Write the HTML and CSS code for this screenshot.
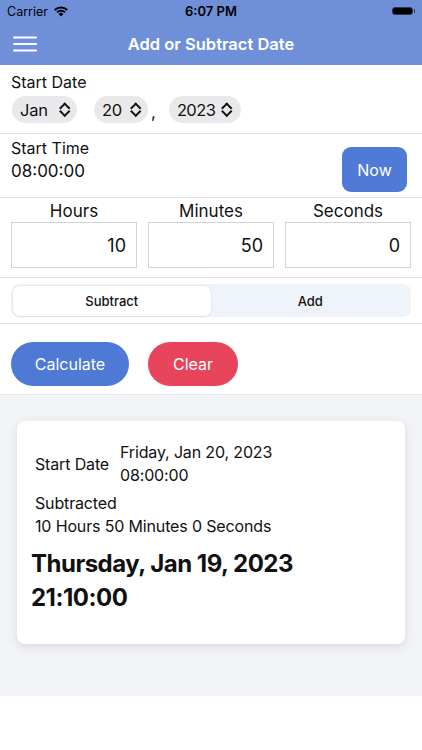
FILE: index.html
```html
<!DOCTYPE html>
<html>
<head>
<meta charset="utf-8">
<link rel="stylesheet" href="styles.css">
</head>
<body>
<div class="app">
  <div class="top">
    <div class="status">
      <div class="carrier">Carrier
        <svg class="wifi" width="16" height="12" viewBox="0 0 16 12"><path d="M8 11.5 L5.6 8.9 A3.4 3.4 0 0 1 10.4 8.9 Z" fill="#000"/><path d="M3.4 6.6 A6.6 6.6 0 0 1 12.6 6.6 L11.3 8 A4.7 4.7 0 0 0 4.7 8 Z" fill="#000"/><path d="M1.1 4.3 A9.9 9.9 0 0 1 14.9 4.3 L13.6 5.7 A8 8 0 0 0 2.4 5.7 Z" fill="#000"/></svg>
      </div>
      <div class="clock">6:07 PM</div>
      <div class="battery"><span class="cell"></span><span class="nub"></span></div>
    </div>
    <div class="nav">
      <svg class="menu" width="24" height="16" viewBox="0 0 24 16"><rect x="0" y="0.5" width="24" height="2" rx="1" fill="#fff"/><rect x="0" y="7" width="24" height="2" rx="1" fill="#fff"/><rect x="0" y="13.5" width="24" height="2" rx="1" fill="#fff"/></svg>
      <div class="title">Add or Subtract Date</div>
    </div>
  </div>

  <div class="sec date-sec">
    <div class="label">Start Date</div>
    <div class="pickers">
      <div class="pill p-month"><span>Jan</span><span class="chev"></span></div>
      <div class="pill p-day"><span>20</span><span class="chev"></span></div>
      <span class="comma">,</span>
      <div class="pill p-year"><span>2023</span><span class="chev"></span></div>
    </div>
  </div>

  <div class="sec time-sec">
    <div>
      <div class="label">Start Time</div>
      <div class="value">08:00:00</div>
    </div>
    <div class="now">Now</div>
  </div>

  <div class="sec units">
    <div class="unit"><div class="ulabel">Hours</div><div class="box">10</div></div>
    <div class="unit"><div class="ulabel">Minutes</div><div class="box">50</div></div>
    <div class="unit"><div class="ulabel">Seconds</div><div class="box">0</div></div>
  </div>

  <div class="sec seg-sec">
    <div class="seg">
      <div class="segitem on">Subtract</div>
      <div class="segitem">Add</div>
    </div>
  </div>

  <div class="actions">
    <div class="btn calc">Calculate</div>
    <div class="btn clear">Clear</div>
  </div>

  <div class="result-area">
    <div class="card">
      <div class="row">
        <div class="rlabel">Start Date</div>
        <div class="rval">Friday, Jan 20, 2023<br>08:00:00</div>
      </div>
      <div class="sub">Subtracted<br>10 Hours 50 Minutes 0 Seconds</div>
      <div class="big">Thursday, Jan 19, 2023<br>21:10:00</div>
    </div>
  </div>
</div>
</body>
</html>
```

FILE: styles.css
```css
html, body {
  margin: 0;
  padding: 0;
  background: #fff;
}
body {
  font-family: Inter, "Liberation Sans", sans-serif;
  color: #111;
}
.app {
  width: 422px;
  height: 750px;
  overflow: hidden;
}
.top {
  background: #6f90d9;
}
.status {
  height: 22px;
  display: flex;
  align-items: center;
  justify-content: space-between;
  padding: 0 7px 0 7px;
  font-size: 12.5px;
  color: #000;
  position: relative;
}
.carrier {
  display: flex;
  align-items: center;
  gap: 5px;
}
.clock {
  font-weight: 600;
  font-size: 13px;
  position: absolute;
  left: 0;
  right: 0;
  text-align: center;
}
.battery {
  display: flex;
  align-items: center;
  gap: 1px;
}
.cell {
  width: 19px;
  height: 6px;
  background: #000;
  border: 1.5px solid #2d3a55;
  border-radius: 3px;
}
.nub {
  width: 1.5px;
  height: 4px;
  background: #2d3a55;
  border-radius: 1px;
}
.nav {
  height: 43px;
  display: flex;
  align-items: center;
  position: relative;
  padding-left: 13px;
}
.title {
  position: absolute;
  left: 0;
  right: 0;
  text-align: center;
  color: #fff;
  font-size: 16.5px;
  font-weight: 600;
}
.sec {
  border-bottom: 1px solid #e2e2e4;
  padding: 0 11px;
}
.label {
  font-size: 16px;
}
.date-sec {
  padding-top: 7px;
  box-sizing: border-box;
  height: 69px;
}
.pickers {
  display: flex;
  align-items: center;
  margin-top: 4px;
}
.pill {
  background: #e9e9ec;
  border-radius: 14px;
  height: 27px;
  display: flex;
  align-items: center;
  justify-content: space-between;
  padding: 0 8px 0 8px;
  box-sizing: border-box;
  font-size: 16.5px;
  letter-spacing: -0.2px;
}
.p-month { width: 65px; margin-left: 1px; }
.p-day { width: 54px; margin-left: 17px; }
.p-year { width: 72px; margin-left: 13px; letter-spacing: -0.6px; padding-right: 9px; }
.comma { font-size: 17px; margin-left: 3px; margin-top: 4px; }
.chev {
  width: 11px;
  height: 14px;
  position: relative;
  display: inline-block;
}
.chev::before, .chev::after {
  content: "";
  position: absolute;
  left: 2.5px;
  width: 5.5px;
  height: 5.5px;
  border-left: 2px solid #111;
  border-top: 2px solid #111;
}
.chev::before { top: 1.5px; transform: rotate(45deg); }
.chev::after { top: 5.5px; transform: rotate(225deg); }
.time-sec {
  height: 64px;
  box-sizing: border-box;
  display: flex;
  justify-content: space-between;
  align-items: flex-start;
  padding-top: 4px;
  padding-right: 15px;
}
.value {
  font-size: 17px;
  margin-top: 3px;
}
.now {
  width: 65px;
  height: 45px;
  background: #4f7ad6;
  border-radius: 9px;
  color: #fff;
  font-size: 16px;
  display: flex;
  align-items: center;
  justify-content: center;
  margin-top: 9px;
}
.units {
  height: 80px;
  box-sizing: border-box;
  display: grid;
  grid-template-columns: 1fr 1fr 1fr;
  gap: 11px;
  padding-top: 2px;
}
.ulabel {
  text-align: center;
  font-size: 17px;
  height: 22px;
  line-height: 22px;
}
.box {
  height: 46px;
  box-sizing: border-box;
  border: 1.5px solid #d3d3d5;
  display: flex;
  align-items: center;
  justify-content: flex-end;
  padding-right: 10px;
  font-size: 18px;
}
.seg-sec {
  height: 46px;
  box-sizing: border-box;
  padding-top: 6px;
}
.seg {
  height: 33px;
  background: #eff3fa;
  border-radius: 8px;
  display: grid;
  grid-template-columns: 1fr 1fr;
  padding: 1.5px;
  box-sizing: border-box;
}
.segitem {
  display: flex;
  align-items: center;
  justify-content: center;
  font-size: 13px;
  font-weight: 500;
  border-radius: 7px;
}
.segitem.on {
  background: #fff;
  box-shadow: 0 0 0 0.5px #dde2ea, 0 1px 2px rgba(0,0,0,0.08);
}
.actions {
  height: 71px;
  box-sizing: border-box;
  display: flex;
  gap: 19px;
  padding: 18px 11px 0;
  border-bottom: 1px solid #e6e8ec;
}
.btn {
  height: 44px;
  border-radius: 22px;
  color: #fff;
  font-size: 16px;
  display: flex;
  align-items: center;
  justify-content: center;
}
.calc { width: 118px; background: #4e79d5; }
.clear { width: 90px; background: #e8455c; }
.result-area {
  background: #f2f3f7;
  height: 301px;
  padding: 26px 17px 0;
  box-sizing: border-box;
}
.card {
  background: #fff;
  border-radius: 8px;
  height: 223px;
  box-sizing: border-box;
  padding: 20px 18px 0;
  box-shadow: 0 3px 10px rgba(0,0,0,0.10);
  font-size: 16px;
  line-height: 23px;
  letter-spacing: -0.15px;
}
.row {
  display: flex;
  align-items: center;
  gap: 11px;
}
.sub {
  margin-top: 5px;
}
.big {
  font-size: 24px;
  font-weight: 700;
  line-height: 34px;
  margin-top: 9px;
  margin-left: -4px;
  letter-spacing: -0.5px;
}
```
